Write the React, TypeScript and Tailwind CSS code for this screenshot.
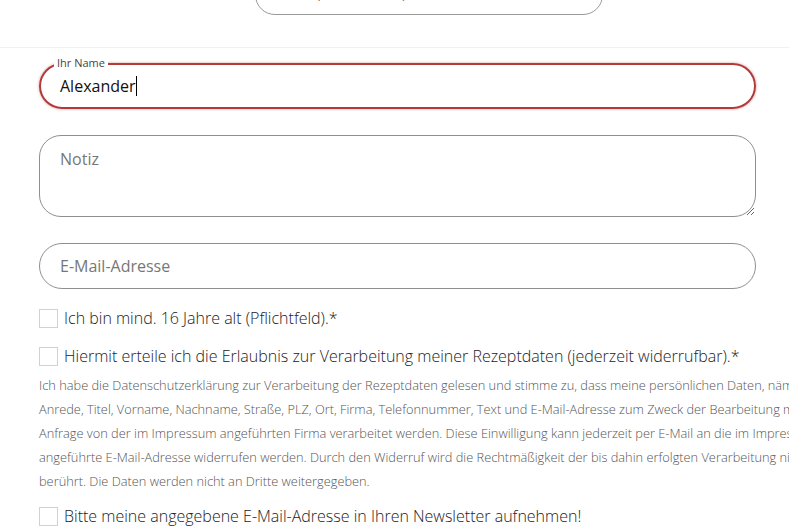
import React from 'react'

const consentLines = [
  'Ich habe die Datenschutzerklärung zur Verarbeitung der Rezeptdaten gelesen und stimme zu, dass meine persönlichen Daten, nämlich',
  'Anrede, Titel, Vorname, Nachname, Straße, PLZ, Ort, Firma, Telefonnummer, Text und E-Mail-Adresse zum Zweck der Bearbeitung meiner',
  'Anfrage von der im Impressum angeführten Firma verarbeitet werden. Diese Einwilligung kann jederzeit per E-Mail an die im Impressum',
  'angeführte E-Mail-Adresse widerrufen werden. Durch den Widerruf wird die Rechtmäßigkeit der bis dahin erfolgten Verarbeitung nicht',
  'berührt. Die Daten werden nicht an Dritte weitergegeben.',
]

function Checkbox({ label }: { label: string }) {
  return (
    <label className="flex items-center gap-[6px]">
      <span className="w-[19px] h-[19px] shrink-0 border border-[#d2d2d2] bg-white" />
      <span className="text-[16px] leading-[24px] font-light text-[#222] whitespace-nowrap">{label}</span>
    </label>
  )
}

export default function App() {
  return (
    <div className="w-[789px] h-[528px] overflow-hidden bg-white font-['Open_Sans',sans-serif]">
      {/* Search box cut off at top */}
      <div className="flex items-start h-[48px] border-b border-[#f0f0f0]">
        <div className="ml-[255px] mt-[-25px] w-[348px] h-[40px] rounded-[20px] border border-[#999] bg-white flex items-center pb-[8px] px-[28px] text-[15px] text-[#888]">
          Rezept weiterempfehlen
        </div>
      </div>

      <div className="ml-[39px] w-[717px] pt-[15px] flex flex-col">
        {/* Name */}
        <div className="relative h-[46px] rounded-full border-2 border-[#b23a3a] shadow-[0_0_3px_rgba(178,34,34,0.45)] flex items-center pl-[19px]">
          <span className="absolute -top-[9px] left-[13px] bg-white px-[3px] text-[11px] leading-[14px] text-[#444]">
            Ihr Name
          </span>
          <span className="text-[16px] text-[#111]">Alexander</span>
          <span className="w-px h-[20px] bg-black" />
        </div>

        {/* Notiz */}
        <textarea
          placeholder="Notiz"
          className="mt-[26px] h-[82px] rounded-[22px] border border-[#8f8f8f] px-[20px] pt-[11px] text-[16px] leading-[24px] text-[#333] placeholder:text-[#777] resize-y outline-none"
        />

        {/* E-Mail */}
        <input
          placeholder="E-Mail-Adresse"
          className="mt-[26px] h-[46px] rounded-full border border-[#8f8f8f] px-[20px] text-[16px] text-[#333] placeholder:text-[#777] outline-none"
        />

        <div className="mt-[17px] flex flex-col gap-[14px]">
          <Checkbox label="Ich bin mind. 16 Jahre alt (Pflichtfeld).*" />
          <Checkbox label="Hiermit erteile ich die Erlaubnis zur Verarbeitung meiner Rezeptdaten (jederzeit widerrufbar).*" />
        </div>

        <div className="mt-[5px] text-[12.8px] leading-[24px] text-[#555] font-light whitespace-nowrap">
          {consentLines.map((line) => (
            <div key={line}>{line}</div>
          ))}
        </div>

        <div className="mt-[11px]">
          <Checkbox label="Bitte meine angegebene E-Mail-Adresse in Ihren Newsletter aufnehmen!" />
        </div>
      </div>
    </div>
  )
}
